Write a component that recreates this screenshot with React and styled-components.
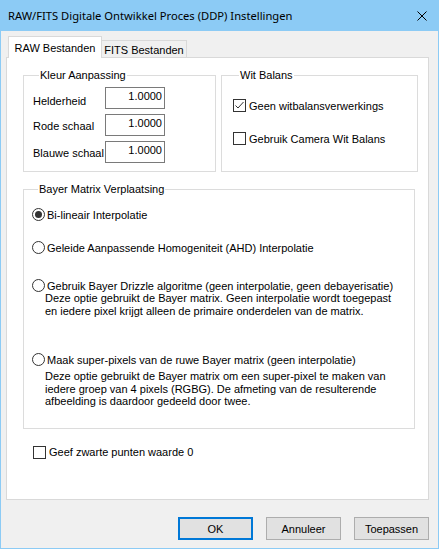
import React from 'react'
import styled, { createGlobalStyle } from 'styled-components'

const GlobalStyle = createGlobalStyle`
  html, body {
    margin: 0;
    padding: 0;
    background: #f0f0f0;
  }
  body {
    font-family: 'Liberation Sans', Arial, sans-serif;
    font-size: 11px;
    color: #000;
  }
`

const Window = styled.div`
  width: 439px;
  height: 549px;
  box-sizing: border-box;
  border: 1px solid #8ccbf5;
  border-top: none;
  background: #f0f0f0;
  display: flex;
  flex-direction: column;
`

const TitleBar = styled.div`
  height: 31px;
  flex: none;
  margin: 0 -1px;
  background: #8ccbf5;
  display: flex;
  align-items: center;
  justify-content: space-between;
  padding: 0 12px 0 8px;
  font-family: 'Noto Sans', 'Open Sans', sans-serif;
  font-size: 11.2px;
  color: #000;
`

const Close = styled.svg`
  width: 10px;
  height: 10px;
`

const Body = styled.div`
  flex: 1;
  display: flex;
  flex-direction: column;
  padding: 5px 8px 0 5px;
`

const TabStrip = styled.div`
  height: 21px;
  display: flex;
  align-items: flex-end;
  padding-left: 2px;
  position: relative;
  z-index: 1;
`

const Tab = styled.div`
  width: ${(p) => p.$width}px;
  height: ${(p) => (p.$active ? 22 : 17)}px;
  margin-bottom: ${(p) => (p.$active ? -1 : 0)}px;
  box-sizing: border-box;
  border: 1px solid #d9d9d9;
  border-bottom: none;
  border-left-width: ${(p) => (p.$active ? 1 : 0)}px;
  background: ${(p) => (p.$active ? '#fff' : '#f0f0f0')};
  display: flex;
  align-items: center;
  justify-content: center;
  padding-top: ${(p) => (p.$active ? 0 : 1)}px;
`

const Panel = styled.div`
  width: 423px;
  height: 443px;
  box-sizing: border-box;
  background: #fff;
  border: 1px solid #d9d9d9;
  padding: 11px 0 0 16px;
  display: flex;
  flex-direction: column;
`

const TopRow = styled.div`
  display: flex;
  gap: 5px;
`

const Group = styled.fieldset`
  margin: ${(p) => p.$mt || 0}px 0 0;
  width: ${(p) => p.$width}px;
  box-sizing: border-box;
  min-inline-size: 0;
  border: 1px solid #dcdcdc;
  padding: ${(p) => p.$pad};
  display: flex;
  flex-direction: column;
`

const Legend = styled.legend`
  font-size: 11px;
  line-height: 13px;
  padding: 0 1px;
  margin-left: 6px;
`

const FieldRow = styled.div`
  display: flex;
  align-items: center;
  height: 22px;
  & + & {
    margin-top: 5px;
  }
`

const FieldLabel = styled.span`
  width: 72px;
  padding-top: ${(p) => p.$drop || 2}px;
`

const NumberBox = styled.input`
  width: 60px;
  height: 22px;
  box-sizing: border-box;
  border: 1px solid #7a7a7a;
  padding: 0 2px 4px;
  margin: 0;
  text-align: right;
  font-family: inherit;
  font-size: 11px;
  color: #000;
  background: #fff;
  outline: none;
`

const CheckRow = styled.label`
  display: flex;
  align-items: center;
  gap: 3px;
  height: 17px;
  margin-top: ${(p) => p.$mt || 0}px;
  margin-left: ${(p) => p.$ml || 0}px;
`

const Box = styled.span`
  width: 13px;
  height: 13px;
  box-sizing: border-box;
  border: 1px solid #333;
  background: #fff;
  display: flex;
  align-items: center;
  justify-content: center;
  flex: none;
`

const RadioRow = styled.label`
  display: flex;
  align-items: center;
  gap: 2px;
  height: 13px;
  margin-top: ${(p) => p.$mt || 0}px;
`

const Circle = styled.span`
  width: 13px;
  height: 13px;
  box-sizing: border-box;
  border: 1px solid #333;
  border-radius: 50%;
  background: #fff;
  display: flex;
  align-items: center;
  justify-content: center;
  flex: none;
  &::after {
    content: '';
    width: 7px;
    height: 7px;
    border-radius: 50%;
    background: #333;
    display: ${(p) => (p.$on ? 'block' : 'none')};
  }
`

const Note = styled.p`
  margin: ${(p) => p.$mt || 0}px 0 0 13px;
  line-height: ${(p) => p.$lh || 13}px;
`

const Footer = styled.div`
  display: flex;
  justify-content: flex-end;
  gap: 13px;
  padding: 17px 0 0;
  margin-right: 1px;
`

const Button = styled.button`
  width: 75px;
  height: 23px;
  box-sizing: border-box;
  margin: 0;
  padding: 0;
  border: ${(p) => (p.$default ? '2px solid #0078d7' : '1px solid #adadad')};
  background: #e1e1e1;
  font-family: inherit;
  font-size: 11px;
  color: #000;
`

function CheckBox({ checked, children, ...rest }) {
  return (
    <CheckRow {...rest}>
      <Box>
        {checked && (
          <svg width='11' height='11' viewBox='0 0 11 11'>
            <polyline
              points='1.5,5.5 4,8 9.5,2'
              fill='none'
              stroke='#333'
              strokeWidth='1'
            />
          </svg>
        )}
      </Box>
      {children}
    </CheckRow>
  )
}

function Radio({ on, children, ...rest }) {
  return (
    <RadioRow {...rest}>
      <Circle $on={on} />
      {children}
    </RadioRow>
  )
}

const fields = [
  { label: 'Helderheid', drop: 6 },
  { label: 'Rode schaal' },
  { label: 'Blauwe schaal' },
]

export default function App() {
  return (
    <>
      <GlobalStyle />
      <Window>
        <TitleBar>
          <span>RAW/FITS Digitale Ontwikkel Proces (DDP) Instellingen</span>
          <Close viewBox='0 0 10 10'>
            <path d='M0.5 0.5 L9.5 9.5 M9.5 0.5 L0.5 9.5' stroke='#000' strokeWidth='1' />
          </Close>
        </TitleBar>
        <Body>
          <TabStrip>
            <Tab $active $width={94}>RAW Bestanden</Tab>
            <Tab $width={85}>FITS Bestanden</Tab>
          </TabStrip>
          <Panel>
            <TopRow>
              <Group $width={193} $pad='5px 0 8px 9px'>
                <Legend>Kleur Aanpassing</Legend>
                {fields.map((f) => (
                  <FieldRow key={f.label}>
                    <FieldLabel $drop={f.drop}>{f.label}</FieldLabel>
                    <NumberBox readOnly value='1.0000' />
                  </FieldRow>
                ))}
              </Group>
              <Group $width={197} $pad='15px 0 0 11px'>
                <Legend>Wit Balans</Legend>
                <CheckBox checked>Geen witbalansverwerkings</CheckBox>
                <CheckBox $mt={16}>Gebruik Camera Wit Balans</CheckBox>
              </Group>
            </TopRow>
            <Group $mt={11} $width={392} $pad='12px 0 20px 8px'>
              <Legend>Bayer Matrix Verplaatsing</Legend>
              <Radio on>Bi-lineair Interpolatie</Radio>
              <Radio $mt={20}>Geleide Aanpassende Homogeniteit (AHD) Interpolatie</Radio>
              <Radio $mt={25}>
                Gebruik Bayer Drizzle algoritme (geen interpolatie, geen debayerisatie)
              </Radio>
              <Note $mt={0}>
                Deze optie gebruikt de Bayer matrix. Geen interpolatie wordt toegepast
                <br />
                en iedere pixel krijgt alleen de primaire onderdelen van de matrix.
              </Note>
              <Radio $mt={35}>Maak super-pixels van de ruwe Bayer matrix (geen interpolatie)</Radio>
              <Note $mt={4} $lh={12.5}>
                Deze optie gebruikt de Bayer matrix om een super-pixel te maken van
                <br />
                iedere groep van 4 pixels (RGBG). De afmeting van de resulterende
                <br />
                afbeelding is daardoor gedeeld door twee.
              </Note>
            </Group>
            <CheckBox $mt={15} $ml={10}>Geef zwarte punten waarde 0</CheckBox>
          </Panel>
          <Footer>
            <Button $default>OK</Button>
            <Button>Annuleer</Button>
            <Button>Toepassen</Button>
          </Footer>
        </Body>
      </Window>
    </>
  )
}
